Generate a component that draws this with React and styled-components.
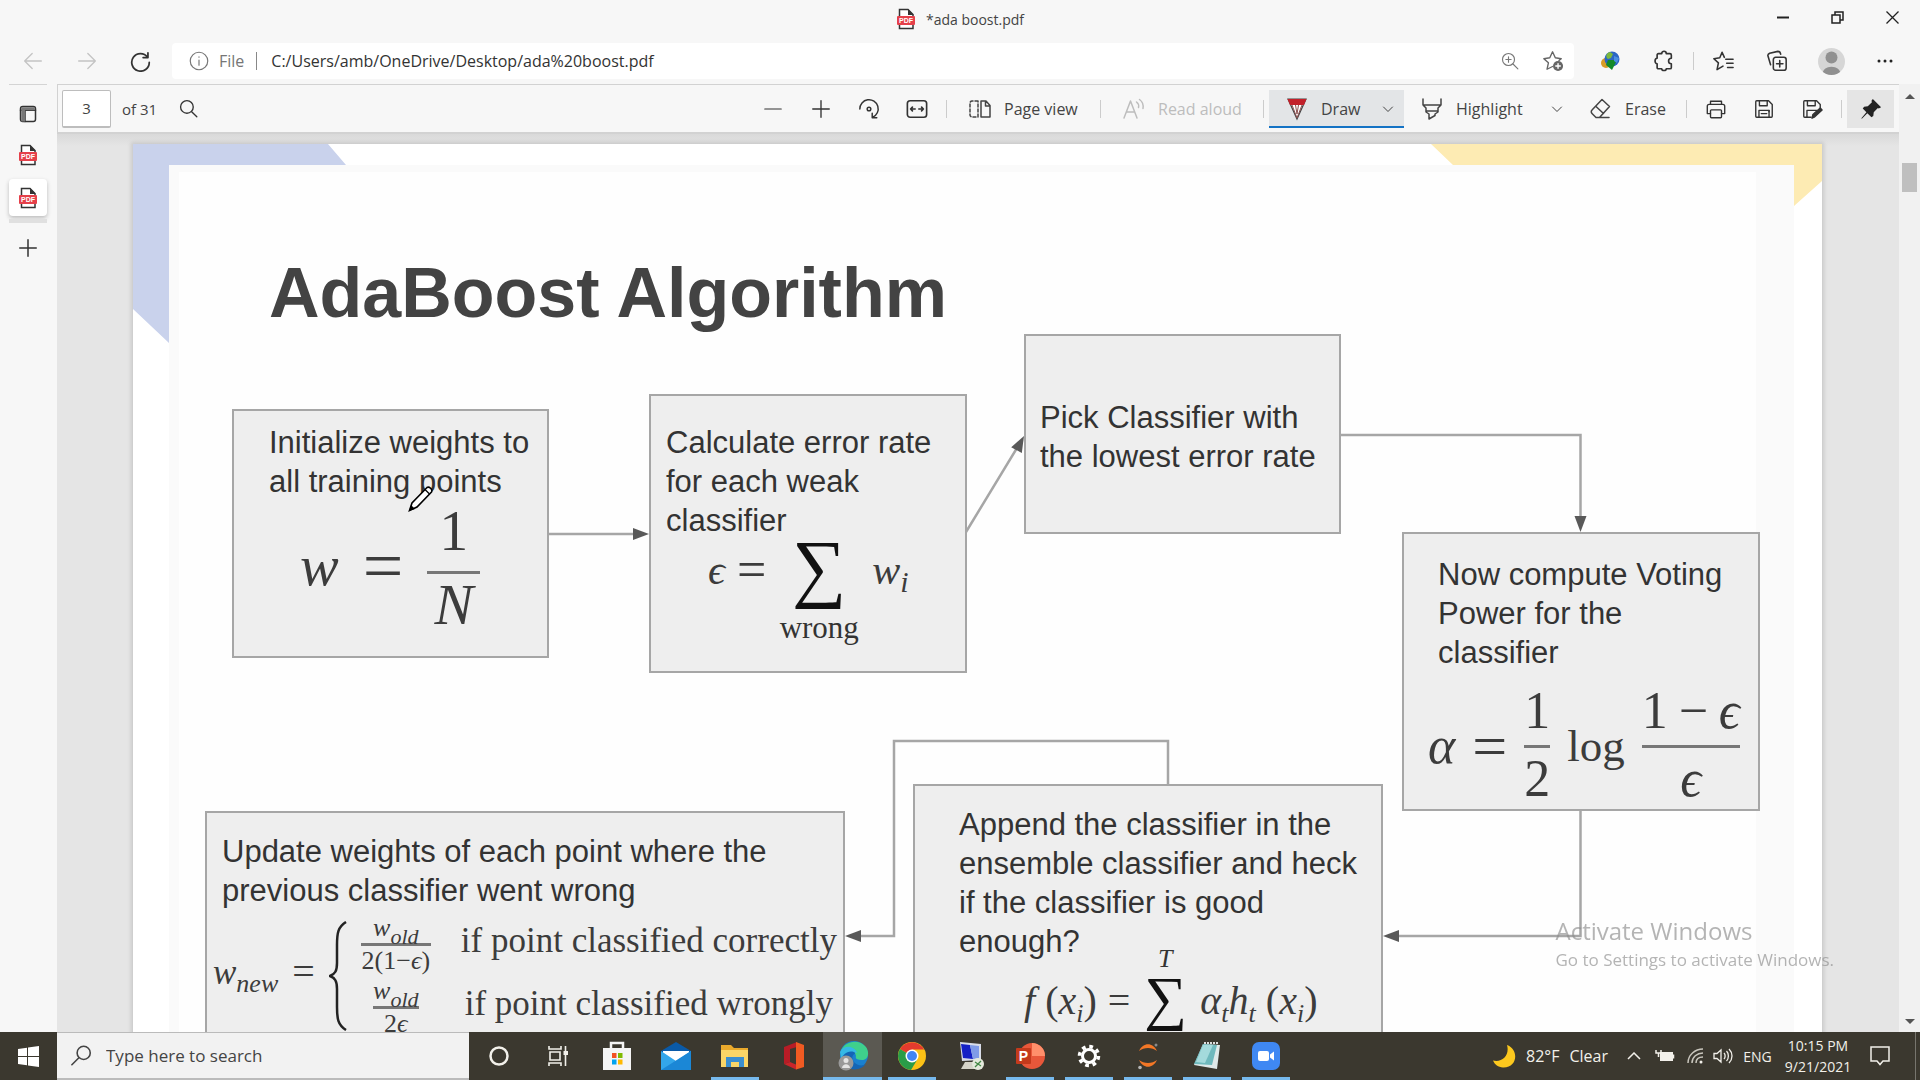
import React from "react";
import styled, { createGlobalStyle, css } from "styled-components";

const ui = `"Open Sans", "Noto Sans", sans-serif`;
const serif = `"Liberation Serif", "DejaVu Serif", serif`;

const GlobalStyle = createGlobalStyle`
  * { box-sizing: border-box; }
  body { margin: 0; background: #f7f7f7; color: #444; font-family: ${ui}; font-size: 16px; }
  button, input { font: inherit; color: inherit; }
  svg { display: block; flex: none; }
`;

/* ---------- shell ---------- */
const Shell = styled.div`
  display: flex;
  flex-direction: column;
  height: 100vh;
  overflow: hidden;
`;
const TitleBar = styled.header`
  display: grid;
  grid-template-columns: 1fr auto 1fr;
  height: 38px;
`;
const WindowTitle = styled.div`
  grid-column: 2;
  display: flex;
  align-items: center;
  gap: 10px;
  font-size: 14px;
`;
const WindowButtons = styled.div`
  display: flex;
  justify-content: flex-end;
`;
const IconButton = styled.button`
  display: flex;
  align-items: center;
  justify-content: center;
  flex: none;
  width: ${(p) => p.$w || 54}px;
  height: ${(p) => p.$h || 36}px;
  padding: 0;
  border: 0;
  background: ${(p) => (p.$on ? "#e5e5e5" : "none")};
  color: ${(p) => p.$color || "#333"};
`;
const NavBar = styled.nav`
  display: flex;
  align-items: center;
  height: 46px;
  padding: 0 8px 0 6px;
`;
const AddressBar = styled.label`
  flex: 1;
  display: flex;
  align-items: center;
  height: 36px;
  margin: 0 9px 0 6px;
  padding: 0 0 0 17px;
  border-radius: 4px;
  background: #fff;
  color: #767676;
`;
const Scheme = styled.span`
  margin: 0 14px 0 10px;
  padding-right: 12px;
  border-right: 1px solid #888;
  line-height: 18px;
`;
const AddressInput = styled.input`
  flex: 1;
  min-width: 0;
  padding: 0;
  border: 0;
  outline: 0;
  background: none;
  color: #333;
`;
const Divider = styled.i`
  flex: none;
  width: 1px;
  height: 18px;
  margin: 0 ${(p) => p.$m || 5}px;
  background: #ccc;
`;
const Avatar = styled.span`
  display: flex;
  width: 27px;
  height: 27px;
  border-radius: 50%;
  overflow: hidden;
  background: #d6d6d6;
`;
const Body = styled.div`
  flex: 1;
  min-height: 0;
  display: grid;
  grid-template-columns: 57px minmax(0, 1fr) 21px;
`;

/* ---------- vertical tabs ---------- */
const SideTabs = styled.aside`
  display: flex;
  flex-direction: column;
  align-items: center;
  padding: 0 10px 0 8px;
`;
const SideButton = styled.button`
  display: flex;
  align-items: center;
  justify-content: center;
  width: 38px;
  height: 37px;
  margin-top: ${(p) => p.$mt || 0}px;
  padding: 0;
  border: 0;
  border-radius: 4px;
  background: ${(p) => (p.$on ? "#fff" : "none")};
  box-shadow: ${(p) => (p.$on ? "0 2px 4px #bbb" : "none")};
  color: #333;
`;
const SideRule = styled.div`
  flex: none;
  width: 38px;
  height: ${(p) => p.$h || 1}px;
  margin-top: ${(p) => p.$mt || 0}px;
  background: ${(p) => p.$c || "#d4d4d4"};
`;

/* ---------- pdf viewer ---------- */
const Main = styled.main`
  display: flex;
  flex-direction: column;
  min-height: 0;
`;
const Toolbar = styled.div`
  flex: none;
  display: flex;
  align-items: center;
  height: 50px;
  padding: 0 5px 0 4px;
  border: solid #d2d2d2;
  border-width: 1px 0 2px 1px;
`;
const PageInput = styled.input`
  width: 49px;
  height: 38px;
  border: 1px solid #bdbdbd;
  border-bottom-width: 2px;
  border-radius: 2px;
  background: #fff;
  text-align: center;
  font-size: 15px;
`;
const PageCount = styled.span`
  margin: 0 7px 0 11px;
  font-size: 15px;
`;
const Tools = styled.div`
  display: flex;
  align-items: center;
  margin-left: auto;
`;
const Tool = styled.button`
  display: flex;
  align-items: center;
  gap: 12px;
  width: ${(p) => p.$w}px;
  height: 38px;
  padding: 0 10px 0 16px;
  border: 0;
  border-bottom: 2px solid ${(p) => (p.$on ? "#1473c5" : "transparent")};
  border-top: 2px solid transparent;
  background: ${(p) => (p.$on ? "#e3e5e7" : "none")};
  color: #444;
  white-space: nowrap;
  &:disabled { color: #bdbdbd; }
`;
const Chevron = styled.span`
  margin-left: auto;
`;
const Viewer = styled.div`
  flex: 1;
  min-height: 0;
  overflow: hidden;
  padding: 10px 77px 0 76px;
  background: linear-gradient(#d9d9d9, #e5e5e5 12px);
`;
const ScrollTrack = styled.div`
  display: flex;
  flex-direction: column;
  align-items: center;
  padding: 10px 0 8px;
  background: #f1f1f1;
`;
const ScrollThumb = styled.div`
  width: 15px;
  height: 29px;
  margin: 64px 0 auto;
  background: #bfbfbf;
`;

/* ---------- slide ---------- */
const Slide = styled.article`
  position: relative;
  height: 950px;
  background: #fff;
  box-shadow: 0 0 4px 2px #c9c9c9;
  color: #333;
  font-family: "Liberation Sans", Arial, sans-serif;
`;
const SlidePanel = styled.div`
  position: absolute;
  inset: 21px 28px 0 36px;
  background: #fefefe;
  border: solid #fafafa;
  border-width: 7px 38px 0 10px;
`;
const Corner = styled.svg`
  position: absolute;
  top: 0;
  ${(p) => (p.$right ? "right: 0;" : "left: 0;")}
`;
const SlideTitle = styled.h1`
  position: absolute;
  left: 136px;
  top: 109px;
  margin: 0;
  color: #434343;
  font-size: 70px;
  line-height: 80px;
  white-space: nowrap;
`;
const Connectors = styled.svg`
  position: absolute;
  inset: 0;
  width: 100%;
  height: 100%;
`;
const Node = styled.section`
  position: absolute;
  left: ${(p) => p.$x}px;
  top: ${(p) => p.$y}px;
  width: ${(p) => p.$w}px;
  height: ${(p) => p.$h}px;
  border: 2px solid #a6a6a6;
  background: #eee;
`;
const NodeText = styled.p`
  margin: 0;
  padding: ${(p) => p.$t}px 0 0 ${(p) => p.$l}px;
  font-size: 31px;
  line-height: 39px;
  white-space: nowrap;
`;
const PenCursor = styled.svg`
  position: absolute;
  left: 275px;
  top: 341px;
`;

/* ---------- formulas ---------- */
const Formula = styled.div`
  display: flex;
  align-items: center;
  gap: ${(p) => p.$gap || 0}px;
  height: ${(p) => p.$h}px;
  padding-left: ${(p) => p.$l}px;
  color: #3c3c3c;
  font-family: ${serif};
  font-size: ${(p) => p.$s}px;
  line-height: 1;
  white-space: nowrap;
`;
/* Terms beside a fraction sit lower, level with its bar. */
const Term = styled.span`
  padding: ${(p) => (p.$low ? "6px 0 0" : "0 0 8px")};
  ${(p) => p.$s && css`font-size: ${p.$s}px;`}
`;
const Var = styled.i`
  font-style: italic;
`;
const Sub = styled.sub`
  font-size: ${(p) => p.$s}px;
  line-height: 0;
  vertical-align: -8px;
  font-style: italic;
`;
const Fraction = styled.span`
  display: flex;
  flex-direction: column;
  align-items: center;
  width: ${(p) => p.$w}px;
  font-size: ${(p) => p.$s}px;
`;
const Numerator = styled.span`
  align-self: stretch;
  border-bottom: 3px solid #777;
  text-align: center;
  line-height: ${(p) => p.$h}px;
  ${(p) => p.$spread && css`display: flex; justify-content: space-between;`}
`;
const Denominator = styled.span`
  line-height: ${(p) => p.$h}px;
`;
/* The limit rows above and below are equally tall, so the sign stays on the axis. */
const BigSum = styled.span`
  display: grid;
  grid-template-rows: ${(p) => p.$limit}px auto ${(p) => p.$limit}px;
  justify-items: center;
  width: ${(p) => p.$w}px;
  font-size: ${(p) => p.$limit}px;
  color: #333;
`;
const SumSign = styled.span`
  grid-row: 2;
  padding-bottom: 14px;
  color: #111;
  font-size: ${(p) => p.$s}px;
  line-height: ${(p) => p.$h}px;
`;
const Limit = styled.span`
  grid-row: ${(p) => (p.$over ? 1 : 3)};
`;
const Cases = styled.div`
  display: grid;
  grid-template-columns: 70px auto;
  justify-items: center;
  align-items: center;
  column-gap: 30px;
`;

const Watermark = styled.aside`
  position: fixed;
  right: 86px;
  bottom: 107px;
  color: rgba(140, 140, 140, 0.65);
  font-size: 17px;
  line-height: 26px;
`;
const WatermarkTitle = styled.div`
  font-size: 24px;
  line-height: 32px;
`;

/* ---------- taskbar ---------- */
const Taskbar = styled.footer`
  flex: none;
  display: flex;
  height: 48px;
  background: #3b382f;
  color: #f2f0ea;
`;
const StartButton = styled(IconButton).attrs({ $w: 57, $h: 48 })``;
const SearchBox = styled.label`
  display: flex;
  align-items: center;
  gap: 14px;
  width: 412px;
  padding-left: 14px;
  border: 1px solid #bbb;
  border-width: 1px 0 2px;
  background: #f2f2f2;
  color: #444;
`;
const SearchInput = styled.input`
  width: 300px;
  padding: 0;
  border: 0;
  outline: 0;
  background: none;
  font-size: 17px;
  &::placeholder { color: #444; opacity: 1; }
`;
const TaskButton = styled.button`
  display: flex;
  align-items: center;
  justify-content: center;
  width: 59px;
  height: 48px;
  padding: 0;
  border: 0;
  color: #f2f0ea;
  background: ${(p) => (p.$state ? "linear-gradient(#76b9ed, #76b9ed) center bottom / " + (p.$state === "active" ? 59 : 48) + "px 3px no-repeat" : "none")};
  background-color: ${(p) => (p.$state === "active" ? "#5b5952" : "transparent")};
`;
const Tray = styled.div`
  display: flex;
  align-items: center;
  margin-left: auto;
`;
const TrayCell = styled.button`
  display: flex;
  align-items: center;
  justify-content: center;
  gap: 10px;
  width: ${(p) => (p.$w ? p.$w + "px" : "auto")};
  height: 48px;
  padding: 0;
  margin-right: ${(p) => p.$mr || 0}px;
  border: 0;
  background: none;
  font-size: ${(p) => p.$s || 16}px;
  line-height: 21px;
  white-space: nowrap;
`;
const ShowDesktop = styled.button`
  width: 5px;
  height: 48px;
  margin-left: 12px;
  padding: 0;
  border: 0;
  border-left: 1px solid #77756e;
  background: none;
`;

/* ---------- icons ---------- */
const Line = ({ w = 22, h, box = 24, sw = 1.5, children }) => (
  <svg width={w} height={h || w} viewBox={`0 0 ${box} ${box}`} fill="none" stroke="currentColor" strokeWidth={sw} strokeLinecap="round" strokeLinejoin="round" aria-hidden="true">
    {children}
  </svg>
);
const PdfIcon = () => (
  <svg width="20" height="22" viewBox="0 0 20 22" aria-hidden="true">
    <path d="M3.500 1.500H12L17 6.500V20.500H3.500Z" fill="#fff" stroke="#333" strokeWidth="1.500" />
    <path d="M12 1V7H17.500Z" fill="#333" />
    <rect x="1" y="8" width="18" height="9" rx="1" fill="#e5404a" />
    <text x="10" y="15" textAnchor="middle" fontFamily="Liberation Sans" fontWeight="700" fontSize="7" fill="#fff">PDF</text>
  </svg>
);
const ChevronDown = () => <Line w={12} sw={2}><path d="M3 8l9 9 9-9" /></Line>;
const Disk = ({ pen }) => (
  <Line>
    <path d={pen ? "M11 21H4a1 1 0 0 1-1-1V4a1 1 0 0 1 1-1H17l4 4v5" : "M4 3H17l4 4V20a1 1 0 0 1-1 1H4a1 1 0 0 1-1-1V4a1 1 0 0 1 1-1Z"} />
    <path d="M7 3V8.500H15.500V3M6.500 21V13.500H17.500V15" />
    {pen ? <path d="M12 22l1-4 8-7 2 2-8 7.500Z" fill="currentColor" /> : <path d="M17.500 13.500V21M9 17H15" />}
  </Line>
);
const Arrow = ({ x, y, r = 0 }) => (
  <path d="M0 0L-16 -6V6Z" fill="#595959" stroke="none" transform={`translate(${x} ${y}) rotate(${r})`} />
);

const taskApps = [
  ["Cortana", "", <svg width="22" height="22" viewBox="0 0 22 22"><circle cx="11" cy="11" r="8.500" fill="none" stroke="#f2f0ea" strokeWidth="2.500" /></svg>],
  ["Task View", "", <svg width="22" height="22" viewBox="0 0 22 22" fill="none" stroke="#f2f0ea" strokeWidth="1.600"><path d="M2 1V4H14V1M2 21V18H14V21M3 7H13V15H3ZM18.500 1V21" /><path d="M16.500 6H21V10H16.500Z" fill="#f2f0ea" stroke="none" /></svg>],
  ["Microsoft Store", "", <svg width="28" height="30" viewBox="0 0 28 30"><path d="M8 9V2H20V9" fill="none" stroke="#f4f4f4" strokeWidth="2.500" /><path d="M0 7H28V29H0Z" fill="#f4f4f4" /><path d="M9 12h4.500v5H9z" fill="#f25022" /><path d="M15 12h4.500v5H15z" fill="#7fba00" /><path d="M9 18.500h4.500v5H9z" fill="#00a4ef" /><path d="M15 18.500h4.500v5H15z" fill="#ffb900" /></svg>],
  ["Mail", "", <svg width="30" height="28" viewBox="0 0 30 28"><path d="M0 9L15 0 30 9V14H0Z" fill="#0a5aa8" /><path d="M2 9H28V20H2Z" fill="#fff" /><path d="M0 9L15 19 30 9V28H0Z" fill="#33a6ea" /><path d="M0 28L30 9V28Z" fill="#1b87d6" /></svg>],
  ["File Explorer", "open", <svg width="28" height="24" viewBox="0 0 28 24"><path d="M0 1H10L13 4H27V22H0Z" fill="#e9a92c" /><path d="M0 6H27V23H0Z" fill="#fbd667" /><path d="M5 13H23V23H18V18H10V23H5Z" fill="#3b8fd0" /></svg>],
  ["Office", "", <svg width="24" height="28" viewBox="0 0 24 28"><path d="M15 0L2 5V22L8 20V7L15 5Z" fill="#b81c26" /><path d="M2 22L14 27.500 15 27V23L8 20Z" fill="#c9252a" /><path d="M14 0L22 3V25L14 27.500Z" fill="#f05a22" /></svg>],
  ["Microsoft Edge", "active", <svg width="32" height="30" viewBox="0 0 32 30"><circle cx="17" cy="14" r="14" fill="#1a80cf" /><path d="M4 10C7 0 22-3 29 6c4 6 2 13-4 13-5 0-7-1-6-4C18 8 9 6 4 10Z" fill="#3fd08c" /><path d="M3 12C7 6 17 6 18 13c-3 0-4 6 0 9 3 3 8 3 11 1C24 30 12 30 8 24 5 20 3 17 3 12Z" fill="#1465b5" /><path d="M3 11C7 3 18 5 20 12 12 8 6 12 4 19Z" fill="#35b8e6" /><circle cx="9" cy="22" r="7.500" fill="#999" /><circle cx="9" cy="19.500" r="2.500" fill="#e4e4e4" /><path d="M5 27C5.500 22 12.500 22 13 27Z" fill="#e4e4e4" /></svg>],
  ["Google Chrome", "open", <svg width="28" height="28" viewBox="0 0 28 28"><circle cx="14" cy="14" r="14" fill="#fbc116" /><path d="M14 14L1.900 7A14 14 0 0 1 26.100 7.500H14Z" fill="#e33b2e" /><path d="M14 14L1.900 7A14 14 0 0 0 13 28L19 18Z" fill="#2a9c48" /><circle cx="14" cy="14" r="6.500" fill="#fff" /><circle cx="14" cy="14" r="5" fill="#4285f4" /></svg>],
  ["Remote Desktop", "", <svg width="28" height="28" viewBox="0 0 28 28"><path d="M3 0L24 2V18L5 19Z" fill="#d8dce8" /><path d="M4 2L13 3 16 17 6 16Z" fill="#1420c4" /><path d="M13 3L22 4V16L16 17Z" fill="#7f9be8" /><path d="M8 20H18L20 27H4Z" fill="#d5d3c8" /><circle cx="21" cy="22" r="6" fill="#e4e9dc" /><path d="M18 20L21 22 18 25M24 19L21 22 24 24" fill="none" stroke="#438845" strokeWidth="1.300" /></svg>],
  ["PowerPoint", "open", <svg width="30" height="28" viewBox="0 0 30 28"><circle cx="17" cy="14" r="13" fill="#e8573a" /><path d="M17 1A13 13 0 0 1 30 14H17Z" fill="#ff8f6b" /><rect x="1" y="6" width="15" height="16" rx="1" fill="#c43a1c" /><text x="8.500" y="19" textAnchor="middle" fontFamily="Liberation Sans" fontWeight="700" fontSize="14" fill="#fff">P</text></svg>],
  ["Settings", "open", <svg width="24" height="24" viewBox="0 0 24 24" fill="none" stroke="#fff"><circle cx="12" cy="12" r="6.500" strokeWidth="3" /><circle cx="12" cy="12" r="9.500" strokeWidth="3.500" strokeDasharray="3.700 3.760" /></svg>],
  ["Jupyter", "open", <svg width="22" height="28" viewBox="0 0 22 28"><path d="M2 9C6 0 16 0 20 9 15 5 7 5 2 9ZM2 18C6 27 16 27 20 18 15 22 7 22 2 18Z" fill="#f37726" /><circle cx="19" cy="3" r="1.500" fill="#8a8a8a" /><circle cx="3" cy="25.500" r="1.800" fill="#b5b5b5" /></svg>],
  ["Notepad", "open", <svg width="28" height="28" viewBox="0 0 28 28"><path d="M10 2L27 3 24 27 1 23Z" fill="#dfe9e9" /><path d="M10 2L24 3 19 23 1 22Z" fill="#6fb9bd" /><path d="M10 3L20 3 12 21 3 20Z" fill="#a4dadc" /><path d="M11 1H25" stroke="#ddd" strokeWidth="2" strokeDasharray="2 1" /></svg>],
  ["Zoom", "open", <svg width="28" height="28" viewBox="0 0 28 28"><rect width="28" height="28" rx="7" fill="#3f88f3" /><rect x="6" y="9" width="11" height="10" rx="2" fill="#fff" /><path d="M18 12.500L22 9.500V18.500L18 15.500Z" fill="#fff" /></svg>],
];

export default function App() {
  return (
    <>
      <GlobalStyle />
      <Shell>
        <TitleBar>
          <WindowTitle><PdfIcon />*ada boost.pdf</WindowTitle>
          <WindowButtons>
            <IconButton $w={55} $h={34} aria-label="Minimize"><svg width="12" height="12"><path d="M0 6.500H12" stroke="#222" strokeWidth="2" /></svg></IconButton>
            <IconButton $w={55} $h={34} aria-label="Restore"><svg width="13" height="13" fill="none" stroke="#222" strokeWidth="1.500"><path d="M1 4H9V12H1ZM4 4V1H12V9H9" /></svg></IconButton>
            <IconButton $w={55} $h={34} aria-label="Close"><svg width="13" height="13"><path d="M0.500 0.500L12.500 12.500M12.500 0.500L0.500 12.500" stroke="#222" strokeWidth="1.300" /></svg></IconButton>
          </WindowButtons>
        </TitleBar>

        <NavBar>
          <IconButton aria-label="Back" $color="#c4c4c4"><Line w={20} sw={1.6}><path d="M22 12H2M11 3L2 12 11 21" /></Line></IconButton>
          <IconButton aria-label="Forward" $color="#c4c4c4"><Line w={20} sw={1.6}><path d="M2 12H22M13 3L22 12 13 21" /></Line></IconButton>
          <IconButton $w={52} aria-label="Refresh"><Line w={21} sw={2}><path d="M20 7A10 10 0 1 0 22 13M20.500 2V7.500H15" /></Line></IconButton>
          <AddressBar>
            <Line w={20} sw={1.4}><circle cx="12" cy="12" r="10.500" /><path d="M12 11V17M12 7V7.500" /></Line>
            <Scheme>File</Scheme>
            <AddressInput aria-label="Address" defaultValue="C:/Users/amb/OneDrive/Desktop/ada%20boost.pdf" />
            <IconButton $w={44} aria-label="Zoom" $color="#777"><Line w={18}><circle cx="10" cy="10" r="8" /><path d="M16 16L22.500 22.500M10 6.500V13.500M6.500 10H13.500" /></Line></IconButton>
            <IconButton $w={42} aria-label="Add to favorites" $color="#666"><Line w={22}><path d="M11.500 18L5.500 21 7 14 2 9.500 8.500 8.500 11.500 2 14.500 8.500 21 9.500 18.500 11.500" /><circle cx="17.500" cy="17.500" r="5.500" fill="currentColor" stroke="none" /><path d="M17.500 15V20M15 17.500H20" stroke="#fff" /></Line></IconButton>
          </AddressBar>
          <IconButton aria-label="Download manager">
            <svg width="20" height="20" viewBox="0 0 20 20"><circle cx="6" cy="12" r="5" fill="#d89c25" /><circle cx="12" cy="8" r="7.500" fill="#2b66c4" /><path d="M10 1C6 2 5 6 8 8L11 7 13 3Z" fill="#7db93c" /><path d="M8 9H17L12 19 6 14Z" fill="#138a2a" /><path d="M14 5L19 7 17 12 14 10Z" fill="#4a8fe0" /></svg>
          </IconButton>
          <IconButton aria-label="Extensions"><Line sw={1.8}><path d="M6 4H9.500C9.500 0.500 14.500 0.500 14.500 4H18.500C19.500 4 20 4.500 20 5.500V9C16 9 16 15 20 15V19C20 20 19.500 20.500 18.500 20.500H14.500C14.500 23 9.500 23 9.500 20.500H6C5 20.500 4.500 20 4.500 19V15C1.500 15 1.500 9 4.500 9V5.500C4.500 4.500 5 4 6 4Z" /></Line></IconButton>
          <Divider $m={2} />
          <IconButton aria-label="Favorites"><Line sw={1.7}><path d="M12 17.500L5.500 21.500 7 14 2 9.500 8.500 8.500 11 2.500 13.500 8M15 10H23M16 14.500H23M17 19H23" /></Line></IconButton>
          <IconButton aria-label="Collections"><Line sw={1.7}><rect x="8" y="8" width="14" height="14" rx="2.500" /><path d="M15 11.500V18.500M11.500 15H18.500M5 16L2 6C2 4.500 3 4 4 3.500L13 1.500C14.500 1.500 15.500 2 16 4.500" /></Line></IconButton>
          <IconButton aria-label="Profile"><Avatar><svg width="27" height="27" viewBox="0 0 27 27"><circle cx="13.500" cy="9.500" r="6" fill="#909090" /><path d="M4.500 27C3.500 16 23.500 16 22.500 27Z" fill="#909090" /></svg></Avatar></IconButton>
          <IconButton aria-label="Settings and more"><svg width="16" height="4" fill="#222"><circle cx="2" cy="2" r="1.500" /><circle cx="8" cy="2" r="1.500" /><circle cx="14" cy="2" r="1.500" /></svg></IconButton>
        </NavBar>

        <Body>
          <SideTabs>
            <SideRule />
            <SideButton $mt={10} aria-label="Tab actions"><Line w={18} sw={2}><rect x="2" y="2" width="20" height="20" rx="3" /><path d="M8 7V22M2 7H22" /><path d="M3 3H21V7H8V22H3Z" fill="#777" stroke="none" /></Line></SideButton>
            <SideButton $mt={4} aria-label="PDF tab"><PdfIcon /></SideButton>
            <SideButton $mt={6} $on aria-label="ada boost.pdf tab"><PdfIcon /></SideButton>
            <SideRule $mt={3} $h={4} $c="#e0e0e0" />
            <SideButton $mt={6} aria-label="New tab"><Line w={18} sw={2}><path d="M12 1V23M1 12H23" /></Line></SideButton>
          </SideTabs>

          <Main>
            <Toolbar>
              <PageInput aria-label="Page number" defaultValue="3" />
              <PageCount>of 31</PageCount>
              <IconButton $w={48} aria-label="Find"><Line w={19} sw={1.7}><circle cx="10" cy="10" r="8" /><path d="M16 16L22.500 22.500" /></Line></IconButton>
              <Tools>
                <IconButton $w={48} aria-label="Zoom out"><Line w={18}><path d="M1 12H23" /></Line></IconButton>
                <IconButton $w={48} aria-label="Zoom in"><Line w={18} sw={1.8}><path d="M1 12H23M12 1V23" /></Line></IconButton>
                <IconButton $w={48} aria-label="Rotate"><Line w={22} sw={1.6}><path d="M2 12A10 10 0 1 1 16 21M15.500 16.500V21.500H20.500" /><circle cx="12" cy="12" r="2" /></Line></IconButton>
                <IconButton $w={48} aria-label="Fit to width"><Line w={22} sw={1.8}><rect x="1.500" y="3" width="21" height="18" rx="3" /><path d="M5 12H10M14 12H19M7 10L5 12 7 14M17 10L19 12 17 14" /></Line></IconButton>
                <Divider />
                <Tool $w={143}><Line w={24}><path d="M13 4H18L22 8.500V20H13ZM17.500 4V9H22" /><path d="M10 4H4C3 4 2 5 2 6V18C2 19 3 20 4 20H10V4" strokeDasharray="3 2" /></Line>Page view</Tool>
                <Divider />
                <Tool $w={152} disabled><Line w={24}><path d="M2 21L8.500 4 15 21M4.500 15H12.500M14.500 5C16.500 6.500 17 8.500 16.500 10.500M17.500 2.500C21 5 21.500 8.500 21 11.500" /></Line>Read aloud</Tool>
                <Divider />
                <Tool $w={135} $on><svg width="24" height="24" viewBox="0 0 24 24"><path d="M3 2H21L12 22Z" fill="#fff" stroke="#444" strokeWidth="1.200" /><path d="M2.500 2H21.500L19 8H5Z" fill="#c3202a" /><path d="M7 8L12 21 17 8M10.500 8L12 17 13.500 8" fill="none" stroke="#8c5050" /></svg>Draw<Chevron><ChevronDown /></Chevron></Tool>
                <Tool $w={169}><Line w={24}><path d="M3 2V8L6 11V15L9 17V22L15 18.500V17L18 15V11L21 8V2M3 8H21M6 14H18" /></Line>Highlight<Chevron><ChevronDown /></Chevron></Tool>
                <Tool $w={108}><Line w={24}><path d="M13 2.500L20.500 9.500 10.500 20.500H7L3 16.500C2 15.500 2 14 3 13ZM7 9.500L14.500 16.500M10.500 20.500H20" /></Line>Erase</Tool>
                <Divider />
                <IconButton $w={48} $h={38} aria-label="Print"><Line><path d="M6 7V3.500H18V7M6 17H2.500V9C2.500 8 3 7 4.500 7H19.500C21 7 21.500 8 21.500 9V17H18" /><rect x="6" y="13" width="12" height="8.500" rx="1" /></Line></IconButton>
                <IconButton $w={48} $h={38} aria-label="Save"><Disk /></IconButton>
                <IconButton $w={48} $h={38} aria-label="Save as"><Disk pen /></IconButton>
                <Divider />
                <IconButton $w={47} $h={38} $on aria-label="Unpin toolbar"><svg width="22" height="22" viewBox="0 0 24 24"><path d="M14 1L23 10 20.500 11.500 19.500 11 15 15.500 14.500 19.500 12.500 21 8 16.500 2 22.500 1.500 22 7 15.500 3 11.500 4.500 9.500 8.500 9 13 4.500 12.500 3Z" fill="#222" /></svg></IconButton>
              </Tools>
            </Toolbar>

            <Viewer>
              <Slide>
                <SlidePanel />
                <Corner width="214" height="200"><path d="M0 0H195L213 21H36V199L0 165Z" fill="#c9d2ec" /></Corner>
                <Corner $right width="391" height="63"><path d="M0 0H391V37L363 62V21H22Z" fill="#fdebb3" /></Corner>
                <SlideTitle>AdaBoost Algorithm</SlideTitle>

                <Connectors fill="none" stroke="#a6a6a6" strokeWidth="2.500">
                  <path d="M416 390H510M833 388L884 304M1208 291H1447.500V380M1447.500 667V792H1260M1035 640V597H761V792H720" />
                  <Arrow x={516} y={390} />
                  <Arrow x={891} y={292} r={-62} />
                  <Arrow x={1447.5} y={388} r={90} />
                  <Arrow x={1250} y={792} r={180} />
                  <Arrow x={712} y={792} r={180} />
                </Connectors>

                <Node $x={99} $y={265} $w={317} $h={249}>
                  <NodeText $t={12} $l={35}>Initialize weights to<br />all training points</NodeText>
                  <Formula $s={58} $h={124} $l={66} $gap={24}>
                    <Term $low><Var>w</Var></Term>
                    <Term $low $s={72}>=</Term>
                    <Fraction $w={53} $s={58}><Numerator $h={80}>1</Numerator><Denominator $h={62}><Var>N</Var></Denominator></Fraction>
                  </Formula>
                </Node>

                <Node $x={516} $y={250} $w={318} $h={279}>
                  <NodeText $t={27} $l={15}>Calculate error rate<br />for each weak<br />classifier</NodeText>
                  <Formula $s={42} $h={68} $l={57} $gap={12}>
                    <Term><Var>ϵ</Var></Term>
                    <Term $s={52}>=</Term>
                    <BigSum $w={82} $limit={31}><SumSign $s={76} $h={62}>∑</SumSign><Limit>wrong</Limit></BigSum>
                    <Term><Var>w</Var><Sub $s={30}>i</Sub></Term>
                  </Formula>
                </Node>

                <Node $x={891} $y={190} $w={317} $h={200}>
                  <NodeText $t={62} $l={14}>Pick Classifier with<br />the lowest error rate</NodeText>
                </Node>

                <Node $x={1269} $y={388} $w={358} $h={279}>
                  <NodeText $t={21} $l={34}>Now compute Voting<br />Power for the<br />classifier</NodeText>
                  <Formula $s={52} $h={142} $l={24} $gap={17}>
                    <Term $low><Var>α</Var></Term>
                    <Term $low $s={62}>=</Term>
                    <Fraction $w={26} $s={52}><Numerator $h={68}>1</Numerator><Denominator $h={62}>2</Denominator></Fraction>
                    <Term $low $s={45}>log</Term>
                    <Fraction $w={98} $s={52}><Numerator $h={68} $spread><span>1</span><span>−</span><Var>ϵ</Var></Numerator><Denominator $h={62}><Var>ϵ</Var></Denominator></Fraction>
                  </Formula>
                </Node>

                <Node $x={780} $y={640} $w={470} $h={300}>
                  <NodeText $t={19} $l={44}>Append the classifier in the<br />ensemble classifier and heck<br />if the classifier is good<br />enough?</NodeText>
                  <Formula $s={40} $h={88} $l={109} $gap={11}>
                    <Term><Var>f</Var> (<Var>x</Var><Sub $s={26}>i</Sub>)</Term>
                    <Term>=</Term>
                    <BigSum $w={48} $limit={26}><Limit $over><Var>T</Var></Limit><SumSign $s={60} $h={52}>∑</SumSign></BigSum>
                    <Term><Var>α</Var><Sub $s={26}>t</Sub><Var>h</Var><Sub $s={26}>t</Sub> (<Var>x</Var><Sub $s={26}>i</Sub>)</Term>
                  </Formula>
                </Node>

                <Node $x={72} $y={667} $w={640} $h={273}>
                  <NodeText $t={19} $l={15}>Update weights of each point where the<br />previous classifier went wrong</NodeText>
                  <Formula $s={35} $h={132} $l={6} $gap={14}>
                    <Term><Var>w</Var><Sub $s={26}>new</Sub></Term>
                    <Term $s={40}>=</Term>
                    <svg width="18" height="110" viewBox="0 0 18 110" fill="none" stroke="#222" strokeWidth="2.500"><path d="M17 1C9 6 8 12 8 24V42C8 50 6 53 1 55C6 57 8 60 8 68V86C8 98 9 104 17 109" /></svg>
                    <Cases>
                      <Fraction $w={70} $s={26}><Numerator $h={30}><Var>w</Var><Sub $s={22}>old</Sub></Numerator><Denominator $h={30}>2(1−<Var>ϵ</Var>)</Denominator></Fraction>
                      <Term>if point classified correctly</Term>
                      <Fraction $w={46} $s={26}><Numerator $h={30}><Var>w</Var><Sub $s={22}>old</Sub></Numerator><Denominator $h={30}>2<Var>ϵ</Var></Denominator></Fraction>
                      <Term>if point classified wrongly</Term>
                    </Cases>
                  </Formula>
                </Node>

                <PenCursor width="26" height="27" viewBox="0 0 26 27"><path d="M1.500 25.500L4 18 19 2.500C21 1 25 4.500 23.500 7L9 22Z" fill="#fff" stroke="#000" strokeWidth="1.600" /><path d="M1 26L3 20 7 24Z" fill="#000" /><path d="M17 4.500L21.500 9" stroke="#000" strokeWidth="1.300" /></PenCursor>
              </Slide>
            </Viewer>
          </Main>

          <ScrollTrack>
            <svg width="10" height="5"><path d="M0 5L5 0 10 5Z" fill="#555" /></svg>
            <ScrollThumb />
            <svg width="10" height="5"><path d="M0 0L5 5 10 0Z" fill="#555" /></svg>
          </ScrollTrack>
        </Body>

        <Taskbar>
          <StartButton aria-label="Start"><svg width="21" height="21" viewBox="0 0 21 21" fill="#fff"><path d="M0 3L9 1.800V10H0ZM10 1.600L21 0V10H10ZM0 11H9V19.200L0 18ZM10 11H21V21L10 19.400Z" /></svg></StartButton>
          <SearchBox>
            <Line w={21} sw={1.8}><circle cx="14.500" cy="9" r="7.500" /><path d="M9 14.500L1 22.500" /></Line>
            <SearchInput placeholder="Type here to search" aria-label="Type here to search" />
          </SearchBox>
          {taskApps.map(([name, state, icon]) => (
            <TaskButton key={name} aria-label={name} $state={state}>{icon}</TaskButton>
          ))}
          <Tray>
            <TrayCell $mr={12}>
              <svg width="23" height="23" viewBox="0 0 23 23"><path d="M14 0C26 4 25 23 10 22.500 5 22 2 20 0 15.500 9 18 17 10 14 0Z" fill="#fcc81e" /></svg>
              <span>82°F</span><span>Clear</span>
            </TrayCell>
            <TrayCell $w={28} aria-label="Show hidden icons"><svg width="14" height="8"><path d="M1 7L7 1 13 7" fill="none" stroke="#f2f0ea" strokeWidth="1.500" /></svg></TrayCell>
            <TrayCell $w={33} aria-label="Battery"><svg width="20" height="14" viewBox="0 0 20 14"><path d="M5 3H18V12H5Z" fill="#f2f0ea" /><path d="M1 1V4H6V1M3.500 4V8M18.500 5.500V9.500" fill="none" stroke="#f2f0ea" strokeWidth="1.500" /></svg></TrayCell>
            <TrayCell $w={28} aria-label="Network"><svg width="17" height="16" viewBox="0 0 17 16" fill="none" stroke="#c9c6bd" strokeWidth="1.500"><path d="M1 15C1 7 8 1 16 1M5 15C5 9 10 5 16 5M9 15C9 11 12 9 16 9" /><circle cx="14" cy="14" r="1.500" fill="#f2f0ea" stroke="none" /></svg></TrayCell>
            <TrayCell $w={27} aria-label="Volume"><svg width="20" height="16" viewBox="0 0 20 16" fill="none" stroke="#f2f0ea" strokeWidth="1.300"><path d="M1 5.500H4L8 2V14L4 10.500H1ZM11 5C12.500 6.500 12.500 9.500 11 11M13.500 3C16 5.500 16 10.500 13.500 13M16 1C20 5 20 11 16 15" /></svg></TrayCell>
            <TrayCell $w={43} $s={14}>ENG</TrayCell>
            <TrayCell $w={78} $s={14}>10:15 PM<br />9/21/2021</TrayCell>
            <TrayCell $w={46} aria-label="Notifications"><svg width="20" height="20" viewBox="0 0 20 20"><path d="M1 1H19V15H13L10 18.500 7 15H1Z" fill="none" stroke="#f2f0ea" strokeWidth="1.500" /></svg></TrayCell>
            <ShowDesktop aria-label="Show desktop" />
          </Tray>
        </Taskbar>
      </Shell>
      <Watermark><WatermarkTitle>Activate Windows</WatermarkTitle>Go to Settings to activate Windows.</Watermark>
    </>
  );
}
